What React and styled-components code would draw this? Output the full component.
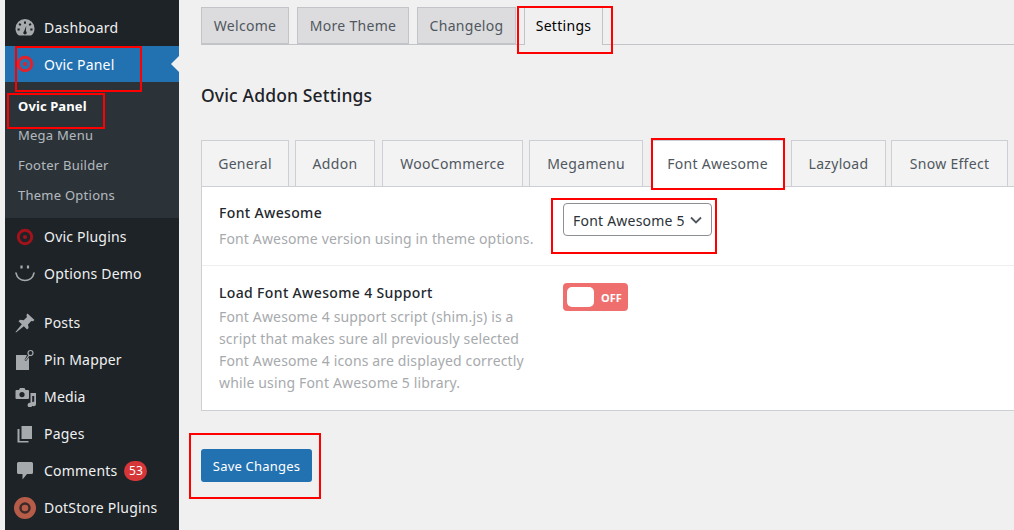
import React from "react";
import styled, { createGlobalStyle } from "styled-components";

const GlobalStyle = createGlobalStyle`
  html, body { margin: 0; padding: 0; background: #f0f0f1; overflow: hidden; }
  body { font-family: "Noto Sans", "Open Sans", sans-serif; }
`;

const Page = styled.div`
  position: relative;
  display: flex;
  width: 1014px;
  height: 530px;
  overflow: hidden;
  padding-left: 5px;
  box-sizing: border-box;
`;

const Sidebar = styled.nav`
  width: 174px;
  flex: none;
  background: #1d2327;
  padding-top: 9px;
`;

const MenuItem = styled.div`
  position: relative;
  display: flex;
  align-items: center;
  height: ${(p) => (p.$active ? 36 : 37)}px;
  margin-bottom: ${(p) => (p.$gap ? 12 : 0)}px;
  background: ${(p) => (p.$active ? "#2271b1" : "transparent")};
  color: ${(p) => (p.$active ? "#fff" : "#f0f0f1")};
  font-size: 14px;
  letter-spacing: 0.2px;
`;

const IconSlot = styled.span`
  width: 39px;
  flex: none;
  display: flex;
  justify-content: center;
  padding-left: 1px;
  box-sizing: border-box;
  svg { display: block; }
`;

const ActiveArrow = styled.span`
  position: absolute;
  right: 0;
  top: 10px;
  border: 8px solid transparent;
  border-right-color: #f0f0f1;
  border-left: 0;
`;

const Badge = styled.span`
  margin-left: 7px;
  min-width: 23px;
  height: 20px;
  border-radius: 10px;
  background: #d63638;
  color: #fff;
  font-size: 12px;
  letter-spacing: 0;
  line-height: 20px;
  text-align: center;
`;

const SubMenu = styled.div`
  background: #2c3338;
  height: 136px;
  padding-top: 9px;
  box-sizing: border-box;
`;

const SubItem = styled.div`
  height: ${(p) => (p.$current ? 29 : 30)}px;
  line-height: 30px;
  padding-left: 13px;
  font-size: 13px;
  letter-spacing: ${(p) => (p.$current ? 0.1 : 0.25)}px;
  color: ${(p) => (p.$current ? "#fff" : "rgba(240,246,252,.7)")};
  font-weight: ${(p) => (p.$current ? 700 : 400)};
`;

const Main = styled.main`
  flex: 1;
  min-width: 0;
  padding: 7px 0 0 22px;
`;

const NavTabs = styled.div`
  display: flex;
  gap: 8px;
  height: 38px;
  box-sizing: border-box;
  border-bottom: 1px solid #c3c4c7;
`;

const NavTab = styled.div`
  height: ${(p) => (p.$active ? 38 : 37)}px;
  width: ${(p) => p.$w}px;
  box-sizing: border-box;
  border: 1px solid #c3c4c7;
  border-bottom: ${(p) => (p.$active ? "0" : "1px solid #c3c4c7")};
  background: ${(p) => (p.$active ? "#f0f0f1" : "#dcdcde")};
  color: ${(p) => (p.$active ? "#000" : "#50575e")};
  font-size: 14px;
  letter-spacing: 0.3px;
  text-align: center;
  line-height: 35px;
`;

const Heading = styled.h2`
  margin: 38px 0 31px;
  height: 26px;
  font-size: 17.5px;
  line-height: 24px;
  font-weight: 500;
  letter-spacing: 0.15px;
  color: #1d2327;
`;

const SectionTabs = styled.div`
  display: flex;
  height: 46px;
  width: 813px;
`;

const SectionTab = styled.div`
  width: ${(p) => p.$w}px;
  margin-right: ${(p) => p.$gap}px;
  height: ${(p) => (p.$active ? 47 : 46)}px;
  position: relative;
  box-sizing: border-box;
  border: 1px solid #ccd0d4;
  border-bottom: 0;
  background: ${(p) => (p.$active ? "#fff" : "#f3f3f4")};
  color: #50575e;
  font-size: 14px;
  letter-spacing: 0.3px;
  text-align: center;
  line-height: 46px;
`;

const Panel = styled.section`
  width: 830px;
  height: 225px;
  box-sizing: border-box;
  background: #fff;
  border: 1px solid #ccd0d4;
`;

const Row = styled.div`
  display: flex;
  padding: ${(p) => p.$pad};
  height: ${(p) => p.$h}px;
  box-sizing: border-box;
  & + & { border-top: 1px solid #eeeeee; }
`;

const Info = styled.div`
  width: 344px;
  flex: none;
`;

const Label = styled.div`
  font-size: 14px;
  line-height: 22px;
  font-weight: 500;
  letter-spacing: 0.35px;
  color: #23282d;
`;

const Hint = styled.p`
  margin: ${(p) => p.$top}px 0 0;
  max-width: 320px;
  font-size: 14px;
  line-height: 22px;
  color: #a7aaad;
  letter-spacing: 0.15px;
`;

const SelectBox = styled.div`
  width: 149px;
  height: 33px;
  box-sizing: border-box;
  display: flex;
  align-items: center;
  justify-content: space-between;
  padding: 1px 9px 0;
  margin-top: 1px;
  border: 1px solid #8c8f94;
  border-radius: 4px;
  font-size: 14px;
  color: #2c3338;
  letter-spacing: 0.22px;
`;

const Toggle = styled.div`
  display: flex;
  align-items: center;
  gap: 7px;
  width: 65px;
  height: 28px;
  margin-top: 1px;
  padding-left: 4px;
  box-sizing: border-box;
  border-radius: 4px;
  background: #ef6f6f;
  color: #fff;
  font-size: 11px;
  font-weight: 700;
`;

const Knob = styled.span`
  width: 27px;
  height: 20px;
  border-radius: 5px;
  background: #fff;
`;

const SaveButton = styled.button`
  display: block;
  margin-top: 38px;
  width: 111px;
  height: 33px;
  border: 0;
  border-radius: 3px;
  background: #2271b1;
  color: #fff;
  font: 400 13px "Noto Sans", sans-serif;
  letter-spacing: 0.2px;
  padding: 0;
`;

// the red boxes somebody drew on top of the screenshot
const Mark = styled.div`
  position: absolute;
  left: ${(p) => p.$x}px;
  top: ${(p) => p.$y}px;
  width: ${(p) => p.$w}px;
  height: ${(p) => p.$h}px;
  box-sizing: border-box;
  border: 2px solid #f00;
  pointer-events: none;
`;

const Gauge = () => (
  <svg width="20" height="18" viewBox="0 0 20 18" fill="#a7aaad">
    <path fillRule="evenodd" d="M10 0a9.500 9.500 0 0 0-9.500 9.500c0 2 .5 3.800 1.500 5.200C3 16 4 16.500 5 16.500h10c1 0 2-.5 3-1.800 1-1.400 1.500-3.200 1.500-5.200A9.500 9.500 0 0 0 10 0zM9 2.500h2v2.200H9zM4.800 4l1.600 1.400-1.300 1.500-1.600-1.400zM15.200 4l1.300 1.500-1.600 1.400-1.300-1.500zM2.500 9.500h2.200v2H2.500zm12.800 0h2.200v2h-2.200zM11.200 7l-.3 5.200a1.700 1.700 0 0 1 .8 1.500c0 1-.8 1.700-1.700 1.700s-1.700-.7-1.700-1.700c0-.6.300-1.200.8-1.500z" />
  </svg>
);

const Target = ({ color }) => (
  <svg width="18" height="18" viewBox="0 0 18 18">
    <circle cx="9" cy="9" r="6.700" fill="none" stroke={color} strokeWidth="3" />
    <circle cx="9" cy="9" r="2" fill={color} />
  </svg>
);

const Smile = () => (
  <svg width="22" height="20" viewBox="0 0 22 20" fill="none" stroke="#a7aaad" strokeWidth="1.600">
    <path d="M2 9c1 5 5 7.500 9 7.500s8-2.500 9-7.500" strokeLinecap="round" />
    <path d="M7.500 1.500v3M14 1.500v3" strokeWidth="2.200" />
  </svg>
);

const Pin = () => (
  <svg width="20" height="20" viewBox="0 0 20 20" fill="#a7aaad">
    <path d="M12.500.5l7 6.500-1.500 1.300-1.700-.3-3.300 3.400.6 3.600-1.500 1.500-3.200-3.300L1 19.500l-.5-.5 6.300-7.700-3.300-3.100L5 6.700l3.700.5L12 3.900l-.6-1.900z" />
  </svg>
);

const PinMapper = () => (
  <svg width="20" height="22" viewBox="0 0 20 22">
    <path fill="#a7aaad" d="M1 6h11l-2.500 5 1.500 1 3-3.500V21H1z" />
    <circle cx="15.500" cy="4" r="2.500" fill="none" stroke="#a7aaad" strokeWidth="1.200" />
    <path d="M14 6.300 10.500 11" stroke="#a7aaad" strokeWidth="1.200" />
  </svg>
);

const MediaIcon = () => (
  <svg width="21" height="20" viewBox="0 0 21 20" fill="#a7aaad">
    <path fillRule="evenodd" d="M1.500 3H4l1-2h4.500l1 2H13a1 1 0 0 1 1 1v7a1 1 0 0 1-1 1H1.500a1 1 0 0 1-1-1V4a1 1 0 0 1 1-1zM7 5a2.600 2.600 0 1 0 0 5.200A2.600 2.600 0 0 0 7 5z" />
    <path d="M15.500 6H21v11a2.300 2.300 0 1 1-1.800-2.200V9h-2v9a2.300 2.300 0 1 1-1.700-2.200z" />
  </svg>
);

const PagesIcon = () => (
  <svg width="18" height="18" viewBox="0 0 18 18" fill="#a7aaad">
    <path d="M5.500 1H16v13H5.500z" />
    <path d="M3.500 4v12h9v1.500H1.500V4z" />
  </svg>
);

const CommentIcon = () => (
  <svg width="18" height="20" viewBox="0 0 18 20" fill="#a7aaad">
    <path d="M2.500 1h13A1.500 1.500 0 0 1 17 2.500v9a1.500 1.500 0 0 1-1.500 1.500H11l-4.500 5.500V13h-4A1.500 1.500 0 0 1 1 11.500v-9A1.500 1.500 0 0 1 2.500 1z" />
  </svg>
);

const DotStore = () => (
  <svg width="22" height="22" viewBox="0 0 22 22">
    <circle cx="11" cy="11" r="11" fill="#b85c4a" />
    <circle cx="11" cy="11" r="4.500" fill="none" stroke="#3a2a28" strokeWidth="2.400" />
  </svg>
);

const navTabs = [
  { label: "Welcome", w: 88 },
  { label: "More Theme", w: 112 },
  { label: "Changelog", w: 99 },
  { label: "Settings", w: 79, active: true },
];

const sectionTabs = [
  { label: "General", w: 88, gap: 6 },
  { label: "Addon", w: 80, gap: 7 },
  { label: "WooCommerce", w: 141, gap: 6 },
  { label: "Megamenu", w: 114, gap: 8 },
  { label: "Font Awesome", w: 133, gap: 7, active: true },
  { label: "Lazyload", w: 95, gap: 5 },
  { label: "Snow Effect", w: 117, gap: 0 },
];

const subItems = ["Ovic Panel", "Mega Menu", "Footer Builder", "Theme Options"];

export default function App() {
  return (
    <Page>
      <GlobalStyle />
      <Sidebar>
        <MenuItem><IconSlot><Gauge /></IconSlot>Dashboard</MenuItem>
        <MenuItem $active>
          <IconSlot><Target color="#e3212b" /></IconSlot>Ovic Panel
          <ActiveArrow />
        </MenuItem>
        <SubMenu>
          {subItems.map((s, i) => (
            <SubItem key={s} $current={i === 0}>{s}</SubItem>
          ))}
        </SubMenu>
        <MenuItem><IconSlot><Target color="#a3111a" /></IconSlot>Ovic Plugins</MenuItem>
        <MenuItem $gap><IconSlot><Smile /></IconSlot>Options Demo</MenuItem>
        <MenuItem><IconSlot><Pin /></IconSlot>Posts</MenuItem>
        <MenuItem><IconSlot><PinMapper /></IconSlot>Pin Mapper</MenuItem>
        <MenuItem><IconSlot><MediaIcon /></IconSlot>Media</MenuItem>
        <MenuItem><IconSlot><PagesIcon /></IconSlot>Pages</MenuItem>
        <MenuItem><IconSlot><CommentIcon /></IconSlot>Comments<Badge>53</Badge></MenuItem>
        <MenuItem><IconSlot><DotStore /></IconSlot>DotStore Plugins</MenuItem>
      </Sidebar>

      <Main>
        <NavTabs>
          {navTabs.map((t) => (
            <NavTab key={t.label} $w={t.w} $active={t.active}>{t.label}</NavTab>
          ))}
        </NavTabs>
        <Heading>Ovic Addon Settings</Heading>
        <SectionTabs>
          {sectionTabs.map((t) => (
            <SectionTab key={t.label} $w={t.w} $gap={t.gap} $active={t.active}>{t.label}</SectionTab>
          ))}
        </SectionTabs>
        <Panel>
          <Row $h={78} $pad="15px 17px">
            <Info>
              <Label>Font Awesome</Label>
              <Hint $top={4}>Font Awesome version using in theme options.</Hint>
            </Info>
            <SelectBox>
              Font Awesome 5
              <svg width="12" height="8" viewBox="0 0 12 8" fill="none" stroke="#50575e" strokeWidth="1.800">
                <path d="M1 1.500l5 5 5-5" />
              </svg>
            </SelectBox>
          </Row>
          <Row $h={145} $pad="16px 17px">
            <Info>
              <Label>Load Font Awesome 4 Support</Label>
              <Hint $top={2}>
                Font Awesome 4 support script (shim.js) is a script that makes sure all previously selected Font Awesome 4 icons are displayed correctly while using Font Awesome 5 library.
              </Hint>
            </Info>
            <Toggle><Knob />OFF</Toggle>
          </Row>
        </Panel>
        <SaveButton>Save Changes</SaveButton>
      </Main>

      <Mark $x={15} $y={46} $w={127} $h={46} />
      <Mark $x={7} $y={93} $w={98} $h={36} />
      <Mark $x={517} $y={6} $w={96} $h={48} />
      <Mark $x={651} $y={138} $w={134} $h={52} />
      <Mark $x={551} $y={198} $w={166} $h={56} />
      <Mark $x={189} $y={433} $w={132} $h={66} />
    </Page>
  );
}
